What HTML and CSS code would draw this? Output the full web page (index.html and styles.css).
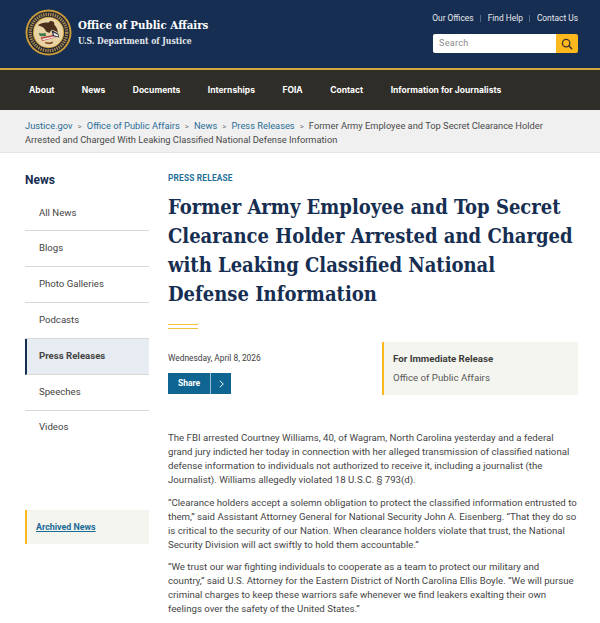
FILE: index.html
```html
<!DOCTYPE html>
<html lang="en">
<head>
    <meta charset="UTF-8">
    <title>Former Army Employee and Top Secret Clearance Holder Arrested</title>
    <link rel="stylesheet" href="styles.css">
</head>
<body>
    <header class="top">
        <div class="brand">
            <svg class="seal" viewBox="0 0 48 48" aria-hidden="true">
                <circle cx="24" cy="24" r="23.5" fill="#c79a3a"/>
                <circle cx="24" cy="24" r="21.5" fill="#1c2230"/>
                <circle cx="24" cy="24" r="18.6" fill="none" stroke="#a98a55" stroke-width="3.4" stroke-dasharray="1.4 1"/>
                <circle cx="24" cy="24" r="16" fill="#c79a3a"/>
                <circle cx="24" cy="24" r="15" fill="#e9d3a4"/>
                <path d="M13 16.5c4-2.6 8-3.4 11-2.4 1-2 3.6-2.4 5-1 .8.8 1 1.800.8 2.800 2 2 3.500 5 4 8.600-2.400-2-4.800-3-6.800-3.200l-2 3.200-3.400-1.600c-1-3-4-5.600-8.600-6.400z" fill="#4a2f1c"/>
                <path d="M14 24.500c2 .6 4.500.6 7 0l.6 2.800c-2.400.8-4.700.8-6.600 0z" fill="#3f7a4a"/>
                <path d="M16 29l14-2.600 1.200 2.800-13.600 3.600z" fill="#b8404a"/>
                <path d="M17.500 30.500l13-2.600.5 1-13 3z" fill="#f4f0e6"/>
                <path d="M27 21.500l7 3.800 1 3.700-6.500-1.500z" fill="#1f2a44"/>
                <path d="M29 24l4.500 2.200.5 1.800-4.500-1.300z" fill="#f4f0e6"/>
                <path d="M21 33.500c2 1 4.500 1 7-.3l.8 1.500c-2.800 1.500-5.800 1.600-8.400.4z" fill="#7a4a2a"/>
            </svg>
            <div class="brand-text">
                <div class="brand-office">Office of Public Affairs</div>
                <div class="brand-dept">U.S. Department of Justice</div>
            </div>
        </div>
        <div class="top-right">
            <div class="util">
                <a href="#">Our Offices</a>
                <span class="util-sep"></span>
                <a href="#">Find Help</a>
                <span class="util-sep"></span>
                <a href="#">Contact Us</a>
            </div>
            <div class="search">
                <div class="search-box">Search</div>
                <div class="search-btn">
                    <svg width="12" height="12" viewBox="0 0 14 14" aria-hidden="true">
                        <circle cx="6" cy="6" r="4.300" fill="none" stroke="#3a3528" stroke-width="1.500"/>
                        <path d="M9.200 9.200l3.300 3.300" stroke="#3a3528" stroke-width="1.700" stroke-linecap="round"/>
                    </svg>
                </div>
            </div>
        </div>
    </header>

    <nav class="mainnav">
        <a href="#">About</a>
        <a href="#">News</a>
        <a href="#">Documents</a>
        <a href="#">Internships</a>
        <a href="#">FOIA</a>
        <a href="#">Contact</a>
        <a href="#">Information for Journalists</a>
    </nav>

    <div class="crumbs">
        <a href="#">Justice.gov</a><span class="crumb-sep">&gt;</span><a href="#">Office of Public Affairs</a><span class="crumb-sep">&gt;</span><a href="#">News</a><span class="crumb-sep">&gt;</span><a href="#">Press Releases</a><span class="crumb-sep">&gt;</span>Former Army Employee and Top Secret Clearance Holder<br>Arrested and Charged With Leaking Classified National Defense Information
    </div>

    <div class="page">
        <aside class="side">
            <h2 class="side-title">News</h2>
            <ul class="side-list">
                <li>All News</li>
                <li>Blogs</li>
                <li>Photo Galleries</li>
                <li>Podcasts</li>
                <li class="active">Press Releases</li>
                <li>Speeches</li>
                <li>Videos</li>
            </ul>
            <div class="archived"><a href="#">Archived News</a></div>
        </aside>

        <main class="content">
            <div class="eyebrow">PRESS RELEASE</div>
            <h1 class="headline">Former Army Employee and Top Secret Clearance Holder Arrested and Charged with Leaking Classified National Defense Information</h1>
            <div class="rule"></div>
            <div class="meta">
                <div class="meta-left">
                    <div class="date">Wednesday, April 8, 2026</div>
                    <div class="share">
                        <span class="share-label">Share</span>
                        <span class="share-arrow">
                            <svg width="5" height="8" viewBox="0 0 5 8" aria-hidden="true"><path d="M1 .8L4.200 4 1 7.200" fill="none" stroke="#fff" stroke-width="1"/></svg>
                        </span>
                    </div>
                </div>
                <div class="release">
                    <div class="release-title">For Immediate Release</div>
                    <div class="release-sub">Office of Public Affairs</div>
                </div>
            </div>
            <div class="body">
                <p>The FBI arrested Courtney Williams, 40, of Wagram, North Carolina yesterday and a federal grand jury indicted her today in connection with her alleged transmission of classified national defense information to individuals not authorized to receive it, including a journalist (the Journalist). Williams allegedly violated 18 U.S.C. § 793(d).</p>
                <p>“Clearance holders accept a solemn obligation to protect the classified information entrusted to them,” said Assistant Attorney General for National Security John A. Eisenberg. “That they do so is critical to the security of our Nation. When clearance holders violate that trust, the National Security Division will act swiftly to hold them accountable.”</p>
                <p>“We trust our war fighting individuals to cooperate as a team to protect our military and country,” said U.S. Attorney for the Eastern District of North Carolina Ellis Boyle. “We will pursue criminal charges to keep these warriors safe whenever we find leakers exalting their own feelings over the safety of the United States.”</p>
            </div>
        </main>
    </div>
</body>
</html>
```

FILE: styles.css
```css
html {
    font-family: Roboto, "Liberation Sans", sans-serif;
}
body {
    margin: 0;
    height: 623px;
    overflow: hidden;
    background-color: #fff;
    color: #3d3d3d;
}
a {
    text-decoration: none;
}

.top {
    display: flex;
    justify-content: space-between;
    height: 68px;
    padding: 0 22px 0 25px;
    background-color: #162e51;
    border-bottom: 2px solid #d3a63f;
}
.brand {
    display: flex;
    align-items: center;
    gap: 6px;
    padding-bottom: 4px;
}
.seal {
    width: 47px;
    height: 47px;
}
.brand-office {
    font-family: "DejaVu Serif Condensed", "DejaVu Serif", serif;
    font-weight: bold;
    font-size: 11.400px;
    color: #fff;
    line-height: 18px;
}
.brand-dept {
    font-family: "DejaVu Serif Condensed", "DejaVu Serif", serif;
    font-weight: bold;
    font-size: 8.500px;
    color: #e4e8ee;
    line-height: 15px;
}
.top-right {
    display: flex;
    flex-direction: column;
    align-items: flex-end;
    padding-top: 12px;
}
.util {
    display: flex;
    align-items: center;
    font-size: 8.400px;
    height: 12px;
}
.util a {
    color: #e6e9ef;
}
.util-sep {
    width: 1px;
    height: 7px;
    margin: 0 6.500px;
    background-color: #55688a;
}
.search {
    display: flex;
    width: 145px;
    height: 19px;
    margin-top: 10px;
    border-radius: 2px;
    overflow: hidden;
}
.search-box {
    flex: 1;
    padding-left: 6px;
    background-color: #fff;
    color: #8a8a8a;
    font-size: 9px;
    line-height: 19px;
    letter-spacing: 0.3px;
}
.search-btn {
    display: flex;
    align-items: center;
    justify-content: center;
    width: 22px;
    background-color: #fdb81e;
}

.mainnav {
    display: flex;
    align-items: center;
    gap: 27.500px;
    height: 40px;
    padding-left: 29px;
    background-color: #2f2d28;
}
.mainnav a {
    color: #fff;
    font-family: Inter, sans-serif;
    font-weight: 700;
    font-size: 8.500px;
}

.crumbs {
    padding: 9px 0 7px 25px;
    background-color: #f0f0f0;
    border-bottom: 1px solid #e4e4e4;
    font-size: 9.300px;
    line-height: 13px;
    color: #4a4a4a;
    height: 26px;
}
.crumbs a {
    color: #2b6d97;
}
.crumb-sep {
    margin: 0 5px;
    font-size: 8px;
    color: #777;
}

.page {
    display: flex;
    gap: 19px;
    padding: 0 22px 0 25px;
}
.side {
    width: 124px;
    flex: none;
}
.side-title {
    margin: 20px 0 0;
    font-size: 12px;
    line-height: 14px;
    font-weight: 700;
    color: #162e51;
}
.side-list {
    list-style: none;
    margin: 8px 0 0;
    padding: 0;
}
.side-list li {
    height: 35px;
    padding-left: 14px;
    line-height: 33px;
    font-size: 9.600px;
    color: #444;
    border-bottom: 1px solid #d8d8d8;
}
.side-list li:first-child {
    line-height: 35px;
}
.side-list li.active {
    border-left: 2px solid #162e51;
    padding-left: 12px;
    background-color: #e7ebf2;
    font-weight: 700;
}
.side-list li:last-child {
    border-bottom: none;
    line-height: 32px;
}
.archived {
    height: 34px;
    margin-top: 64px;
    padding-left: 9px;
    border-left: 2px solid #fdb81e;
    background-color: #f5f5f0;
    line-height: 34px;
    font-size: 8.900px;
    font-weight: 700;
}
.archived a {
    color: #1a6a96;
    text-decoration: underline;
}

.content {
    flex: 1;
    min-width: 0;
}
.eyebrow {
    margin-top: 20px;
    font-size: 8.300px;
    font-weight: 700;
    letter-spacing: 0.2px;
    color: #1f7099;
    line-height: 10px;
}
.headline {
    margin: 10px 0 0;
    font-family: "DejaVu Serif Condensed", "DejaVu Serif", serif;
    font-weight: bold;
    font-size: 20px;
    line-height: 29px;
    color: #162e51;
}
.rule {
    width: 30px;
    height: 3px;
    margin-top: 15px;
    border-top: 1px solid #f2c335;
    border-bottom: 1px solid #f2c335;
}
.meta {
    display: flex;
    justify-content: space-between;
    margin-top: 13px;
}
.meta-left {
    padding-top: 11px;
}
.date {
    font-size: 8.400px;
    line-height: 11px;
}
.share {
    display: flex;
    width: 63px;
    height: 21px;
    margin-top: 9px;
    background-color: #0f6592;
    color: #fff;
    font-size: 8.500px;
    font-weight: 700;
    line-height: 21px;
}
.share-label {
    width: 42px;
    text-align: center;
    border-right: 1px solid #9fc0d4;
}
.share-arrow {
    flex: 1;
    display: flex;
    align-items: center;
    justify-content: center;
}
.release {
    width: 185px;
    height: 53px;
    padding: 0 0 0 9px;
    border-left: 2px solid #fdb81e;
    background-color: #f5f5f0;
}
.release-title {
    margin-top: 10px;
    font-size: 9.700px;
    font-weight: 700;
    line-height: 14px;
}
.release-sub {
    margin-top: 5px;
    font-size: 9.700px;
    line-height: 14px;
    color: #555;
}
.body {
    margin-top: 36px;
    font-size: 9.670px;
    line-height: 14px;
    color: #454545;
}
.body p {
    margin: 0 0 8.700px;
}
```
